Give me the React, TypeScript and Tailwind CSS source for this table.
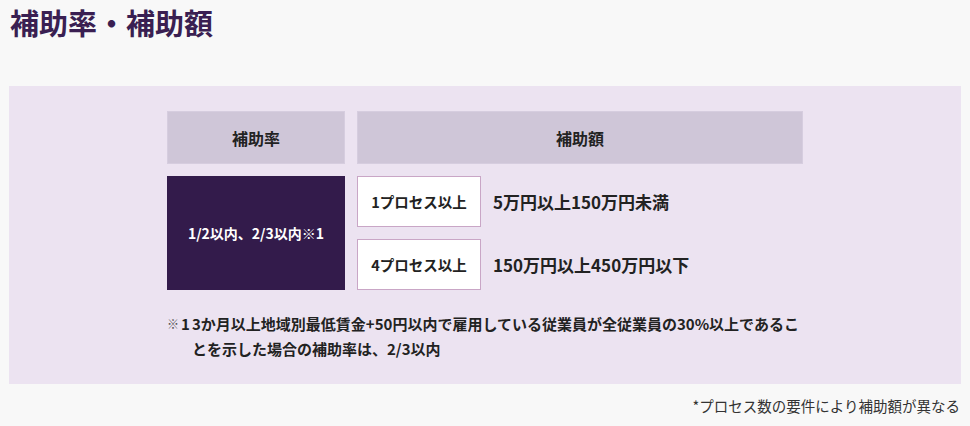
const font = "font-['Noto_Sans_CJK_JP','Noto_Sans',sans-serif]"

export default function App() {
  return (
    <div className={`${font} w-[970px] h-[426px] bg-[#f8f8f8] text-[#222] overflow-hidden`}>
      <h2 className="pl-[10px] pt-[2px] h-[86px] text-[29px] leading-[40px] font-bold text-[#3a1f52]">
        補助率・補助額
      </h2>
      <div className="mx-[9px] h-[298px] bg-[#ece3f1] pt-[25px]">
        <div className="mx-auto w-[636px]">
          <div className="grid grid-cols-[178px_446px] gap-[12px]">
            <div className="h-[53px] flex items-center justify-center bg-[#cfc6d8] border border-[#d6cddf] text-[16px] font-bold">
              補助率
            </div>
            <div className="h-[53px] flex items-center justify-center bg-[#cfc6d8] border border-[#d6cddf] text-[16px] font-bold">
              補助額
            </div>
            <div className="h-[114px] flex items-center justify-center bg-[#331b4b] text-white text-[14px] font-bold">
              1/2以内、2/3以内※1
            </div>
            <div className="flex flex-col gap-[12px]">
              <Row label="1プロセス以上" amount="5万円以上150万円未満" />
              <Row label="4プロセス以上" amount="150万円以上450万円以下" />
            </div>
          </div>
          <div className="mt-[21px] flex text-[15px] leading-[25px] font-bold whitespace-nowrap">
            <span className="w-[25px] shrink-0 flex items-center h-[25px]">
              <span className="w-[14px] text-[12px] font-bold text-[#555]">※</span>
              <span className="w-[11px]">1</span>
            </span>
            <p>
              3か月以上地域別最低賃金+50円以内で雇用している従業員が全従業員の30%以上であるこ
              <br />
              とを示した場合の補助率は、2/3以内
            </p>
          </div>
        </div>
      </div>
      <p className="pr-[10px] pt-[12px] text-right text-[14.5px] leading-[20px] text-[#333]">
        *プロセス数の要件により補助額が異なる
      </p>
    </div>
  )
}

function Row({ label, amount }: { label: string; amount: string }) {
  return (
    <div className="h-[51px] flex items-center">
      <div className="w-[124px] h-full flex items-center justify-center bg-white border border-[#c9a6c6] text-[14.5px] font-bold">
        {label}
      </div>
      <span className="ml-[12px] text-[17px] font-bold">{amount}</span>
    </div>
  )
}
